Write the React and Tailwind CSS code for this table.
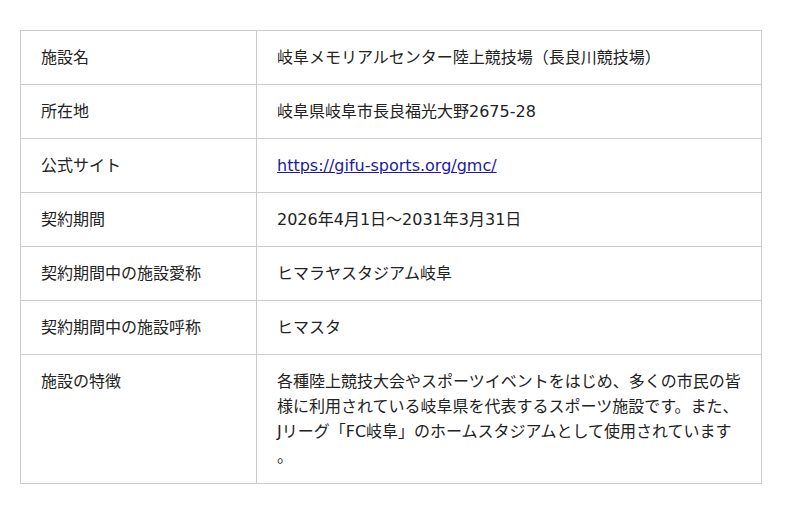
const rows = [
  { label: '施設名', value: '岐阜メモリアルセンター陸上競技場（長良川競技場）' },
  { label: '所在地', value: '岐阜県岐阜市長良福光大野2675-28' },
  {
    label: '公式サイト',
    value: (
      <a href="#" className="text-[#1a1aa6] underline">
        https://gifu-sports.org/gmc/
      </a>
    ),
  },
  { label: '契約期間', value: '2026年4月1日～2031年3月31日' },
  { label: '契約期間中の施設愛称', value: 'ヒマラヤスタジアム岐阜' },
  { label: '契約期間中の施設呼称', value: 'ヒマスタ' },
  {
    label: '施設の特徴',
    value:
      '各種陸上競技大会やスポーツイベントをはじめ、多くの市民の皆様に利用されている岐阜県を代表するスポーツ施設です。また、Jリーグ「FC岐阜」のホームスタジアムとして使用されています。',
  },
]

const App = () => {
  return (
    <div
      className="min-h-screen bg-white pt-[30px] pl-5 text-[16px] leading-[25px] text-[#222]"
      style={{ fontFamily: '"DejaVu Sans", "Noto Sans CJK JP", sans-serif' }}
    >
      <div className="w-[742px] border border-[#ccc]">
        {rows.map((row, i) => (
          <div
            key={row.label}
            className={`grid grid-cols-[236px_1fr] ${i > 0 ? 'border-t border-[#ccc]' : ''}`}
          >
            <div className="border-r border-[#ccc] px-5 py-[14px]">{row.label}</div>
            <div className="px-5 py-[14px] [line-break:anywhere]">{row.value}</div>
          </div>
        ))}
      </div>
    </div>
  )
}

export default App
